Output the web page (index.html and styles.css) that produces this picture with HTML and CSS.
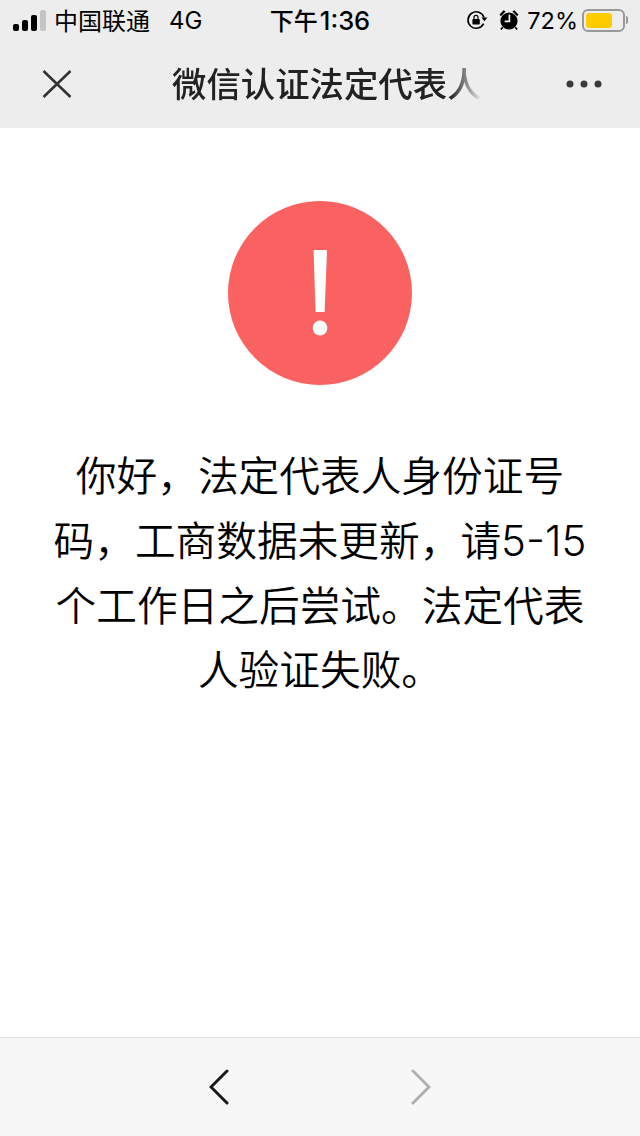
FILE: index.html
```html
<!DOCTYPE html>
<html lang="zh-CN">
<head>
  <meta charset="UTF-8">
  <title>微信认证法定代表人</title>
  <link rel="stylesheet" href="styles.css">
</head>
<body>
  <div class="page">
    <header class="top">
      <div class="status">
        <div class="status-left">
          <div class="signal">
            <span class="bar bar1"></span>
            <span class="bar bar2"></span>
            <span class="bar bar3"></span>
            <span class="bar bar4"></span>
          </div>
          <span class="carrier">中国联通</span>
          <span class="network">4G</span>
        </div>
        <div class="clock">下午<span class="clock-num">1:36</span></div>
        <div class="status-right">
          <svg class="icon-lock" width="22" height="20" viewBox="0 0 22 20">
            <path d="M17.6 13.6A8.2 8.2 0 1 1 18 7.5" fill="none" stroke="#000" stroke-width="1.6"/>
            <path d="M15.4 7.6h6l-3 3.6z" fill="#000"/>
            <rect x="6.4" y="9" width="7.4" height="5.4" rx="1" fill="#000"/>
            <path d="M8 9V7.4a2 2 0 0 1 4 0V9" fill="none" stroke="#000" stroke-width="1.2"/>
          </svg>
          <svg class="icon-alarm" width="20" height="22" viewBox="0 0 20 22">
            <circle cx="10" cy="12" r="8.6" fill="#000"/>
            <path d="M0.6 5.4 4.6 1.2 6.6 2.6 1.8 7.2zM19.4 5.4 15.4 1.2 13.4 2.6 18.2 7.2z" fill="#000"/>
            <path d="M3.6 18.2 2 20.6M16.4 18.2 18 20.6" stroke="#000" stroke-width="1.8"/>
            <path d="M10.4 5.5V12.4H5.6" fill="none" stroke="#ededed" stroke-width="1.7"/>
          </svg>
          <span class="percent">72%</span>
          <div class="battery">
            <div class="battery-fill"></div>
          </div>
          <span class="battery-cap"></span>
        </div>
      </div>
      <nav class="nav">
        <svg class="nav-close" width="30" height="30" viewBox="0 0 30 30">
          <path d="M1.5 2 28.5 28M28.5 2 1.5 28" stroke="#333" stroke-width="2.6" fill="none"/>
        </svg>
        <h1 class="nav-title">微信认证法定代表人</h1>
        <svg class="nav-more" width="36" height="8" viewBox="0 0 36 8">
          <circle cx="4" cy="4" r="3.5" fill="#3a3a3a"/>
          <circle cx="18" cy="4" r="3.5" fill="#3a3a3a"/>
          <circle cx="32" cy="4" r="3.5" fill="#3a3a3a"/>
        </svg>
      </nav>
    </header>

    <main class="content">
      <svg class="alert" width="184" height="184" viewBox="0 0 184 184">
        <circle cx="92" cy="92" r="92" fill="#fa6262"/>
        <path d="M85.6 50.5Q85.4 49 87 49H97.6Q99.2 49 99 50.5L96.6 111H87.6z" fill="#fff"/>
        <circle cx="92" cy="127" r="7.4" fill="#fff"/>
      </svg>
      <p class="message">
        <span class="message-line">你好，法定代表人身份证号</span>
        <span class="message-line">码，工商数据未更新，请<span class="message-num">5-15</span></span>
        <span class="message-line">个工作日之后尝试。法定代表</span>
        <span class="message-line">人验证失败。</span>
      </p>
    </main>

    <footer class="bottom">
      <svg class="arrow" width="20" height="36" viewBox="0 0 20 36">
        <path d="M18 2 2 18 18 34" fill="none" stroke="#1a1a1a" stroke-width="3" stroke-linecap="round"/>
      </svg>
      <svg class="arrow" width="20" height="36" viewBox="0 0 20 36">
        <path d="M2 2 18 18 2 34" fill="none" stroke="#b0b0b0" stroke-width="3" stroke-linecap="round"/>
      </svg>
    </footer>
  </div>
</body>
</html>
```

FILE: styles.css
```css
html, body {
  margin: 0;
  padding: 0;
}

body {
  width: 640px;
  height: 1136px;
  overflow: hidden;
  background-color: #fff;
  color: #000;
  font-family: "Inter", "Noto Sans CJK SC", sans-serif;
}

.page {
  display: flex;
  flex-direction: column;
  height: 1136px;
}

.top {
  background-color: #ededed;
  height: 128px;
  flex: none;
}

.status {
  display: flex;
  justify-content: space-between;
  align-items: center;
  height: 40px;
  font-size: 24px;
}

.status-left {
  display: flex;
  align-items: center;
  box-sizing: border-box;
  width: 228px;
  padding-left: 13px;
}

.signal {
  display: flex;
  align-items: flex-end;
  gap: 3px;
  height: 21px;
  margin-right: 8px;
}

.bar {
  width: 6px;
  border-radius: 2px;
  background-color: #000;
}

.bar1 { height: 7px; }
.bar2 { height: 11px; }
.bar3 { height: 16px; }
.bar4 { height: 21px; background-color: #c4c4c4; }

.carrier {
  margin-right: 19px;
  margin-bottom: 2px;
}

.clock {
  font-weight: 500;
  margin-bottom: 2px;
}

.clock-num {
  font-size: 25.5px;
  margin-left: 2px;
}

.status-right {
  display: flex;
  align-items: center;
  justify-content: flex-end;
  box-sizing: border-box;
  width: 228px;
  padding-right: 12px;
}

.icon-lock {
  margin-right: 11px;
  margin-bottom: 1px;
}

.icon-alarm {
  margin-right: 8px;
  margin-bottom: 1px;
}

.percent {
  font-size: 23.5px;
  margin-right: 4px;
}

.battery {
  width: 43px;
  height: 23px;
  box-sizing: border-box;
  padding: 2px;
  border: 2px solid #999;
  border-radius: 6px;
}

.battery-fill {
  width: 26px;
  height: 15px;
  border-radius: 3px;
  background-color: #fc0;
}

.battery-cap {
  width: 2px;
  height: 8px;
  margin-left: 1px;
  border-radius: 0 2px 2px 0;
  background-color: #999;
}

.nav {
  display: flex;
  align-items: center;
  height: 88px;
  padding: 0 38px 0 42px;
}

.nav-close {
  flex: none;
}

.nav-title {
  flex: 1;
  margin: 0 0 0 100px;
  padding-bottom: 5px;
  font-size: 34.4px;
  font-weight: 500;
  color: #222;
  white-space: nowrap;
  -webkit-mask-image: linear-gradient(to right, #000 278px, transparent 310px);
  mask-image: linear-gradient(to right, #000 278px, transparent 310px);
}

.nav-more {
  flex: none;
}

.content {
  flex: 1;
  display: flex;
  flex-direction: column;
  align-items: center;
  padding: 73px 50px 0;
}

.message {
  margin: 60px 0 0;
  font-size: 40.7px;
  font-weight: 350;
  line-height: 64.4px;
  text-align: center;
  color: #000;
}

.message-line {
  display: block;
}

.message-num {
  font-size: 42px;
}

.bottom {
  flex: none;
  display: flex;
  justify-content: center;
  align-items: center;
  gap: 182px;
  height: 98px;
  border-top: 1px solid #e0e0e0;
  background-color: #f7f7f7;
}
```
